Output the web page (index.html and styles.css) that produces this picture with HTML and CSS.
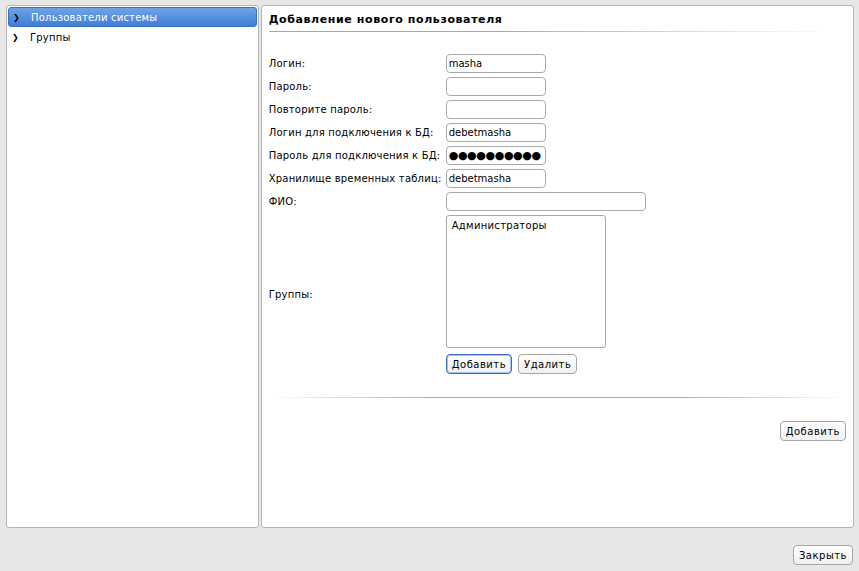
FILE: index.html
```html
<!DOCTYPE html>
<html lang="ru">
<head>
<meta charset="utf-8">
<link rel="stylesheet" href="styles.css">
</head>
<body>
<div class="app">
  <div class="main">
    <aside class="panel side">
      <div class="item selected"><span class="arrow">&#10095;</span>Пользователи системы</div>
      <div class="item"><span class="arrow">&#10095;</span>Группы</div>
    </aside>
    <section class="panel content">
      <h1 class="title">Добавление нового пользователя</h1>
      <div class="sep top-sep"></div>
      <div class="form">
        <label>Логин:</label><div class="field"><div class="input">masha</div></div>
        <label>Пароль:</label><div class="field"><div class="input"></div></div>
        <label>Повторите пароль:</label><div class="field"><div class="input"></div></div>
        <label>Логин для подключения к БД:</label><div class="field"><div class="input">debetmasha</div></div>
        <label>Пароль для подключения к БД:</label><div class="field"><div class="input pwd">●●●●●●●●●●</div></div>
        <label>Хранилище временных таблиц:</label><div class="field"><div class="input">debetmasha</div></div>
        <label>ФИО:</label><div class="field"><div class="input wide"></div></div>
        <label class="groups-label">Группы:</label>
        <div class="field">
          <div class="listbox"><div class="opt">Администраторы</div></div>
          <div class="btnrow">
            <button class="btn focus">Добавить</button>
            <button class="btn">Удалить</button>
          </div>
        </div>
      </div>
      <div class="sep bottom-sep"></div>
      <div class="actions"><button class="btn">Добавить</button></div>
    </section>
  </div>
  <div class="footer"><button class="btn">Закрыть</button></div>
</div>
</body>
</html>
```

FILE: styles.css
```css
html, body {
  margin: 0;
  padding: 0;
  background: #e7e7e7;
  font-family: "DejaVu Sans", sans-serif;
  font-size: 10px;
  color: #000;
}
.app {
  width: 859px;
  height: 571px;
  display: flex;
  flex-direction: column;
}
.main {
  display: flex;
  gap: 2px;
  padding: 5px 5px 0 6px;
  height: 523px;
  box-sizing: content-box;
}
.panel {
  background: #fff;
  border: 1px solid #b4b4b4;
  border-radius: 3px;
  box-sizing: border-box;
  height: 523px;
}
.side {
  width: 253px;
  padding: 1px 1px;
}
.item {
  height: 19px;
  line-height: 19px;
  display: flex;
  align-items: center;
  padding-left: 4px;
  margin-bottom: 1px;
  letter-spacing: 0.2px;
}
.item.selected {
  background: linear-gradient(#6ea3e6, #3f7fd6);
  color: #fff;
  border-radius: 3px;
  border: 1px solid #3a6fbf;
  height: 18px;
}
.arrow {
  display: inline-block;
  width: 18px;
  font-size: 8px;
  font-weight: bold;
  color: #000;
}
.content {
  width: 594px;
  padding: 0 7px 0 7px;
  display: flex;
  flex-direction: column;
}
.title {
  font-size: 11px;
  font-weight: bold;
  margin: 0;
  padding: 7px 0 0 0;
  height: 18px;
  letter-spacing: 0.6px;
}
.sep {
  height: 1px;
}
.top-sep {
  background: linear-gradient(to right, #a8a8a8, #a8a8a8 40%, #ffffff 100%);
  margin-right: 12px;
}
.bottom-sep {
  background: linear-gradient(to right, #ffffff, #a8a8a8 30%, #a8a8a8 70%, #ffffff);
  margin: 23px 0 0 0;
}
.form {
  display: grid;
  grid-template-columns: 177px 1fr;
  row-gap: 4px;
  margin-top: 22px;
}
.form label {
  display: flex;
  align-items: center;
  height: 19px;
  letter-spacing: 0.2px;
  white-space: nowrap;
}
.form .groups-label {
  height: auto;
  align-self: start;
  margin-top: 74px;
}
.input {
  width: 100px;
  height: 19px;
  box-sizing: border-box;
  border: 1px solid #a9a9a9;
  border-radius: 4px;
  padding: 0 2px;
  line-height: 17px;
  overflow: hidden;
  white-space: nowrap;
  background: #fff;
}
.input.wide {
  width: 200px;
}
.input.pwd {
  font-size: 11px;
  letter-spacing: -0.4px;
}
.listbox {
  width: 160px;
  height: 133px;
  box-sizing: border-box;
  border: 1px solid #a9a9a9;
  border-radius: 3px;
  margin-top: 0;
  padding: 4px 5px;
}
.opt {
  letter-spacing: 0.3px;
}
.btnrow {
  display: flex;
  gap: 6px;
  margin-top: 6px;
}
.btn {
  font-family: "DejaVu Sans", sans-serif;
  font-size: 10px;
  letter-spacing: 0.5px;
  background: linear-gradient(#ffffff, #f0f0f0);
  border: 1px solid #a6a6a6;
  border-radius: 4px;
  height: 20px;
  padding: 0 5px;
  color: #000;
}
.btn.focus {
  border: 1px solid #3b6db5;
  box-shadow: inset 0 0 0 1px #a9c5ee;
}
.actions {
  display: flex;
  justify-content: flex-end;
  margin-top: 23px;
}
.footer {
  display: flex;
  justify-content: flex-end;
  padding: 17px 6px 0 0;
}
```
